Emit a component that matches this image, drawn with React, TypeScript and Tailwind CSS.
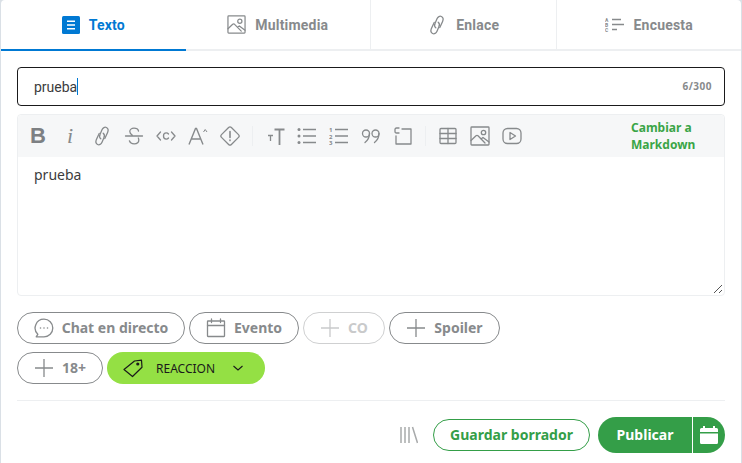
import React from "react";

const s = { fill: "none", stroke: "currentColor", strokeWidth: 1.3, strokeLinecap: "round" as const, strokeLinejoin: "round" as const };

function ImageIcon({ className }: { className: string }) {
  return (
    <svg viewBox="0 0 20 20" className={className} {...s}>
      <rect x="1" y="1" width="18" height="18" rx="0.8" />
      <circle cx="13.5" cy="6.5" r="2.2" />
      <path d="M1 14.5 L6 9.8 Q7 9 8 9.8 L15 17 M11 13 L13 11.5 L19 16" />
    </svg>
  );
}
function LinkIcon({ className }: { className: string }) {
  return (
    <svg viewBox="0 0 20 20" className={className} {...s}>
      <path d="M8.800 12.800C7.600 11.800 7.300 10 8.100 8.300L10 3.800C10.900 1.700 12.800 .7 14.400 1.500C16 2.300 16.500 4.300 15.600 6.400L12.800 12.600" />
      <path d="M11.200 7.200C12.400 8.200 12.700 10 11.900 11.700L10 16.200C9.100 18.300 7.200 19.300 5.600 18.500C4 17.700 3.500 15.700 4.400 13.600L7.200 7.400" />
    </svg>
  );
}
function PlusIcon() {
  return (
    <svg viewBox="0 0 20 20" className="h-5 w-5 shrink-0" fill="none" stroke="currentColor" strokeWidth="1.3">
      <path d="M10 1v18M1 10h18" />
    </svg>
  );
}

function Tab({ active, icon, label, last }: { active?: boolean; icon: React.ReactNode; label: string; last?: boolean }) {
  return (
    <div
      className={`flex h-[51px] flex-1 items-center justify-center gap-[9px] border-b-2 font-['Roboto',sans-serif] text-sm font-bold tracking-[0.2px] ${
        active ? "border-[#0079d3] text-[#0079d3]" : "border-b-[#edeff1] text-[#878a8c]"
      } ${!active && !last ? "border-r border-r-[#edeff1]" : ""}`}
    >
      {icon}
      <span>{label}</span>
    </div>
  );
}

function Chip({ icon, label, faded, w }: { icon: React.ReactNode; label: string; faded?: boolean; w: string }) {
  return (
    <div
      className={`flex h-8 items-center justify-center gap-2 rounded-full border text-sm font-bold ${w} ${
        faded ? "border-[#cfd0d1] text-[#c9cacb]" : "border-[#878a8c] text-[#878a8c]"
      }`}
    >
      {icon}
      <span>{label}</span>
    </div>
  );
}

function Tool({ children, w = "w-5" }: { children: React.ReactNode; w?: string }) {
  return <div className={`flex h-5 items-center justify-center ${w}`}>{children}</div>;
}

const tb = "h-5 w-5";

export default function App() {
  return (
    <div className="h-[463px] w-[742px] overflow-hidden bg-[#dae0e6] font-['Noto_Sans',sans-serif]">
      <div className="mx-px h-full rounded-t bg-white">
        <div className="flex">
          <Tab
            active
            label="Texto"
            icon={
              <svg viewBox="0 0 18 18" className="h-[18px] w-[18px]">
                <rect width="18" height="18" rx="1.5" fill="#0079d3" />
                <path d="M5 5.2h8M5 9h8M5 12.8h8" stroke="#fff" strokeWidth="1.6" />
              </svg>
            }
          />
          <Tab label="Multimedia" icon={<ImageIcon className="h-[19px] w-[19px]" />} />
          <Tab label="Enlace" icon={<LinkIcon className="h-[20px] w-[20px]" />} />
          <Tab
            last
            label="Encuesta"
            icon={
              <svg viewBox="0 0 20 16" className="h-4 w-5" fill="none" stroke="currentColor">
                <path d="M7 2.5h9M7 7.5h12M7 12.5h5" strokeWidth="1.3" />
                <text x="0" y="4.5" fontSize="5" fill="currentColor" stroke="none" fontWeight="700">A</text>
                <text x="0" y="9.5" fontSize="5" fill="currentColor" stroke="none" fontWeight="700">B</text>
                <text x="0" y="14.5" fontSize="5" fill="currentColor" stroke="none" fontWeight="700">C</text>
              </svg>
            }
          />
        </div>

        <div className="px-4 pt-4">
          <div className="flex h-[39px] items-center justify-between rounded border border-[#1a1a1b] pl-4 pr-3 font-['Roboto',sans-serif] text-sm text-[#3c3c3d]">
            <span className="flex items-center">
              prueba
              <span className="h-[17px] w-px bg-[#0079d3]" />
            </span>
            <span className="font-['Noto_Sans',sans-serif] text-[10px] font-bold tracking-[0.5px] text-[#878a8c]">6/300</span>
          </div>

          <div className="relative mt-2 h-[182px] rounded border border-[#edeff1]">
            <div className="flex h-[42px] items-center rounded-t bg-[#f6f7f8] pl-[10px] text-[#878a8c]">
              <div className="flex items-center gap-[12px]">
                <Tool>
                  <span className="font-['Liberation_Sans',sans-serif] text-[22px] font-bold leading-none text-[#7d8083]">B</span>
                </Tool>
                <Tool>
                  <span className="font-['Liberation_Serif',serif] text-[22px] italic leading-none">i</span>
                </Tool>
                <Tool><LinkIcon className={tb} /></Tool>
                <Tool>
                  <svg viewBox="0 0 20 20" className={tb} {...s}>
                    <path d="M1.5 10h17M14.5 5C14 3 12 2.2 10 2.2 7.5 2.2 5.8 3.6 5.8 5.6c0 1.6 1 2.6 2.4 3.4M14.3 12c.4.8.5 1.3.5 2 0 2.3-2 3.8-4.6 3.8-2.4 0-4.2-1-4.8-3" />
                  </svg>
                </Tool>
                <Tool>
                  <svg viewBox="0 0 20 20" className={tb} {...s}>
                    <path d="M4.500 6 1 10l3.500 4M15.500 6 19 10l-3.500 4M12.500 8c-.6-.8-1.400-1.100-2.300-1.100-1.700 0-2.700 1.300-2.700 3.100s1 3.100 2.700 3.100c.9 0 1.700-.3 2.300-1.100" />
                  </svg>
                </Tool>
                <Tool>
                  <svg viewBox="0 0 20 20" className={tb} fill="none" stroke="currentColor" strokeWidth="1.400">
                    <path d="M1 18.500 7.500 2.500h1L15 18.500M3.500 13h9.500" />
                    <path d="M15.500 6l1.700-2.500L19 6" strokeWidth="1" />
                  </svg>
                </Tool>
                <Tool>
                  <svg viewBox="0 0 20 20" className={tb} {...s}>
                    <path d="M8.600 1.500a2 2 0 0 1 2.800 0l7.100 7.100a2 2 0 0 1 0 2.800l-7.100 7.100a2 2 0 0 1-2.800 0l-7.100-7.100a2 2 0 0 1 0-2.800z" />
                    <path d="M10 5.500v6M10 14v.6" strokeWidth="1.600" />
                  </svg>
                </Tool>
              </div>
              <div className="mx-3 h-5 w-px bg-[#edeff1]" />
              <div className="flex items-center gap-3">
                <Tool>
                  <svg viewBox="0 0 20 20" className={tb} fill="none" stroke="currentColor" strokeWidth="1.300">
                    <path d="M9.500 3.500h10M14.500 3.500V19" strokeWidth="1.800" />
                    <path d="M3 9.500h5M5.500 9.500V15" />
                  </svg>
                </Tool>
                <Tool>
                  <svg viewBox="0 0 20 20" className={tb} fill="none" stroke="currentColor" strokeWidth="1.500">
                    <path d="M6 3.500h13M6 10h13M6 16.500h13" />
                    <circle cx="2" cy="3.500" r="1.500" fill="currentColor" stroke="none" />
                    <circle cx="2" cy="10" r="1.500" fill="currentColor" stroke="none" />
                    <circle cx="2" cy="16.500" r="1.500" fill="currentColor" stroke="none" />
                  </svg>
                </Tool>
                <Tool>
                  <svg viewBox="0 0 20 20" className={tb} fill="none" stroke="currentColor" strokeWidth="1.500">
                    <path d="M6 3.500h13M6 10h13M6 16.500h13" />
                    <text x="0" y="6" fontSize="6" fill="currentColor" stroke="none" fontWeight="700">1</text>
                    <text x="0" y="12.500" fontSize="6" fill="currentColor" stroke="none" fontWeight="700">2</text>
                    <text x="0" y="19" fontSize="6" fill="currentColor" stroke="none" fontWeight="700">3</text>
                  </svg>
                </Tool>
                <Tool>
                  <svg viewBox="0 0 20 20" className={tb} {...s}>
                    <circle cx="5" cy="7.500" r="3.500" />
                    <path d="M8.500 7.500c0 4-2 7-4.500 9" />
                    <circle cx="14.500" cy="7.500" r="3.500" />
                    <path d="M18 7.500c0 4-2 7-4.500 9" />
                  </svg>
                </Tool>
                <Tool>
                  <svg viewBox="0 0 20 20" className={tb} {...s}>
                    <path d="M9 3h9v15H3V10" />
                    <path d="M6 2H3.500Q2 2 2 3.500v2Q2 7 3.500 7H6" />
                  </svg>
                </Tool>
              </div>
              <div className="mx-3 h-5 w-px bg-[#edeff1]" />
              <div className="flex items-center gap-3">
                <Tool>
                  <svg viewBox="0 0 20 20" className={tb} {...s}>
                    <rect x="2" y="2.500" width="16" height="15" rx="1" />
                    <path d="M2 7.500h16M2 12.500h16M10 2.500v15" />
                  </svg>
                </Tool>
                <Tool><ImageIcon className={tb} /></Tool>
                <Tool>
                  <svg viewBox="0 0 20 20" className={tb} {...s}>
                    <rect x="1" y="2.500" width="18" height="15" rx="4.500" />
                    <path d="M8 6.500v7l5.500-3.500z" />
                  </svg>
                </Tool>
              </div>
              <div className="ml-auto w-[93px] text-xs font-bold leading-[17px] text-[#3aa547]">Cambiar a Markdown</div>
            </div>
            <div className="px-4 py-2 text-sm text-[#3c3c3d]">prueba</div>
            <svg viewBox="0 0 10 10" className="absolute bottom-[1px] right-[1px] h-2.5 w-2.5" stroke="#555" strokeWidth="1">
              <path d="M9 1 1 9M9 6 6 9" />
            </svg>
          </div>

          <div className="mt-4 flex flex-col gap-2">
            <div className="flex gap-1">
              <Chip
                w="w-[168px]"
                label="Chat en directo"
                icon={
                  <svg viewBox="0 0 20 20" className="h-5 w-5" {...s}>
                    <path d="M10 1.200a8.800 8.800 0 0 1 0 17.600H2.200l1.600-2.500A8.800 8.800 0 0 1 10 1.200z" />
                    <path d="M6.500 10h.01M10 10h.01M13.500 10h.01" strokeWidth="1.600" />
                  </svg>
                }
              />
              <Chip
                w="w-[110px]"
                label="Evento"
                icon={
                  <svg viewBox="0 0 20 20" className="h-5 w-5" {...s}>
                    <rect x="1.500" y="3" width="17" height="15.500" rx="0.500" />
                    <path d="M1.500 7.500h17M5.500 1v3.500M14.500 1v3.500" />
                  </svg>
                }
              />
              <Chip w="w-[82px]" faded label="CO" icon={<PlusIcon />} />
              <Chip w="w-[111px]" label="Spoiler" icon={<PlusIcon />} />
            </div>
            <div className="flex gap-1">
              <Chip w="w-[86px]" label="18+" icon={<PlusIcon />} />
              <div className="flex h-8 w-[158px] items-center rounded-full bg-[#94e044] pl-4 text-xs text-[#1a1a1b]">
                <svg viewBox="0 0 20 20" className="h-5 w-5 shrink-0" {...s} strokeWidth="1.200">
                  <path d="M1 11.500 11.500 3l7-.8.500 7L9.500 18.500z" />
                  <circle cx="14.800" cy="6" r="1" fill="currentColor" />
                </svg>
                <span className="ml-[13px] pt-0.5">REACCION</span>
                <svg viewBox="0 0 12 12" className="ml-[17px] h-3 w-3" fill="none" stroke="currentColor" strokeWidth="1.100">
                  <path d="M1.500 4 6 8l4.500-4" />
                </svg>
              </div>
            </div>
          </div>

          <div className="mt-4 h-px bg-[#edeff1]" />

          <div className="mt-4 flex items-center justify-end">
            <svg viewBox="0 0 18 18" className="mr-[15px] h-[18px] w-[18px] text-[#a8aaab]" fill="none" stroke="currentColor" strokeWidth="1.500">
              <path d="M1 1v16M5 1v16M9 1v16M12.500 1l5 16" />
            </svg>
            <div className="flex h-8 w-[157px] items-center justify-center rounded-full border border-[#349e48] text-sm font-bold text-[#349e48]">
              Guardar borrador
            </div>
            <div className="ml-2 flex h-9 w-[127px] overflow-hidden rounded-full bg-[#349e48] text-sm font-bold text-white">
              <div className="flex w-[94px] items-center justify-center">Publicar</div>
              <div className="flex flex-1 items-center justify-center border-l border-white">
                <svg viewBox="0 0 20 20" className="h-5 w-5" fill="currentColor">
                  <path d="M4 1h2v2h8V1h2v2h1.500Q19 3 19 4.500V7H1V4.500Q1 3 2.500 3H4zM1 8.500h18V17.500Q19 19 17.500 19h-15Q1 19 1 17.500z" />
                </svg>
              </div>
            </div>
          </div>
        </div>
      </div>
    </div>
  );
}
